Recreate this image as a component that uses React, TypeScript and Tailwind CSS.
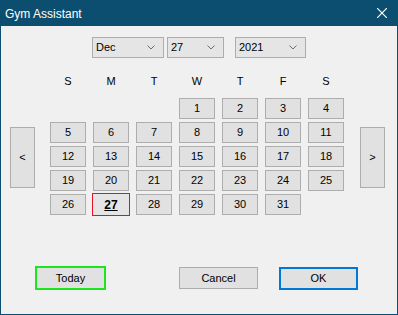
import React from "react";

const days = ["S", "M", "T", "W", "T", "F", "S"];

const cells: (number | null)[] = [
  null, null, null, 1, 2, 3, 4,
  5, 6, 7, 8, 9, 10, 11,
  12, 13, 14, 15, 16, 17, 18,
  19, 20, 21, 22, 23, 24, 25,
  26, 27, 28, 29, 30, 31, null,
];

function Combo({ value, width }: { value: string; width: string }) {
  return (
    <div className={`${width} h-[21px] flex items-center justify-between border border-[#adadad] bg-[#e5e5e5] pl-[3px] pr-[8px]`}>
      <span>{value}</span>
      <svg width="8" height="5" viewBox="0 0 8 5" fill="none" stroke="#6d6d6d" strokeWidth="1">
        <polyline points="0.5,0.5 4,4 7.5,0.5" />
      </svg>
    </div>
  );
}

export default function App() {
  return (
    <div className="w-[398px] h-[315px] flex flex-col text-[11px] text-black" style={{ fontFamily: '"Liberation Sans", Arial, sans-serif' }}>
      {/* Title bar */}
      <div className="h-[26px] bg-[#0b4e70] flex items-center justify-between pl-[5px] pr-[11px] text-white text-[12px]">
        <span className="pt-[1px]">Gym Assistant</span>
        <svg width="10" height="10" viewBox="0 0 10 10" stroke="white" strokeWidth="1.2">
          <line x1="0" y1="0" x2="10" y2="10" />
          <line x1="10" y1="0" x2="0" y2="10" />
        </svg>
      </div>

      <div className="flex-1 bg-[#f0f0f0] border-x border-b border-[#0b4e70] flex flex-col">
        {/* Combos */}
        <div className="flex mt-[11px] ml-[91px]">
          <Combo value="Dec" width="w-[72px]" />
          <div className="ml-[3px]"><Combo value="27" width="w-[57px]" /></div>
          <div className="ml-[11px]"><Combo value="2021" width="w-[71px]" /></div>
        </div>

        {/* Calendar */}
        <div className="flex mt-[16px]">
          <div className="ml-[9px] mt-[53px] w-[25px] h-[61px] border border-[#adadad] bg-[#e1e1e1] flex items-center justify-center">&lt;</div>
          <div className="ml-[15px] w-[294px]">
            <div className="grid grid-cols-[repeat(7,36px)] gap-x-[7px] h-[14px] leading-[14px] text-center">
              {days.map((d, i) => (
                <span key={i}>{d}</span>
              ))}
            </div>
            <div className="grid grid-cols-[repeat(7,36px)] grid-rows-[repeat(5,21px)] gap-x-[7px] gap-y-[3px] mt-[10px]">
              {cells.map((c, i) =>
                c === null ? (
                  <div key={i} />
                ) : c === 27 ? (
                  <div key={i} className="-m-px w-[38px] h-[23px] border border-[#e81123] bg-[#e5e5e5] flex items-center justify-center font-bold underline text-[12px]">
                    {c}
                  </div>
                ) : (
                  <div key={i} className="border border-[#adadad] bg-[#e1e1e1] flex items-center justify-center">
                    {c}
                  </div>
                )
              )}
            </div>
          </div>
          <div className="ml-[16px] mt-[53px] w-[25px] h-[61px] border border-[#adadad] bg-[#e1e1e1] flex items-center justify-center">&gt;</div>
        </div>

        {/* Buttons */}
        <div className="flex items-center mt-[51px] ml-[34px] h-[24px]">
          <div className="w-[71px] h-[24px] border-2 border-[#1ee61e] bg-[#e1e1e1] flex items-center justify-center">Today</div>
          <div className="ml-[73px] w-[79px] h-[22px] border border-[#adadad] bg-[#e1e1e1] flex items-center justify-center">Cancel</div>
          <div className="ml-[21px] w-[79px] h-[23px] border-2 border-[#0078d7] bg-[#e1e1e1] flex items-center justify-center">OK</div>
        </div>
      </div>
    </div>
  );
}
